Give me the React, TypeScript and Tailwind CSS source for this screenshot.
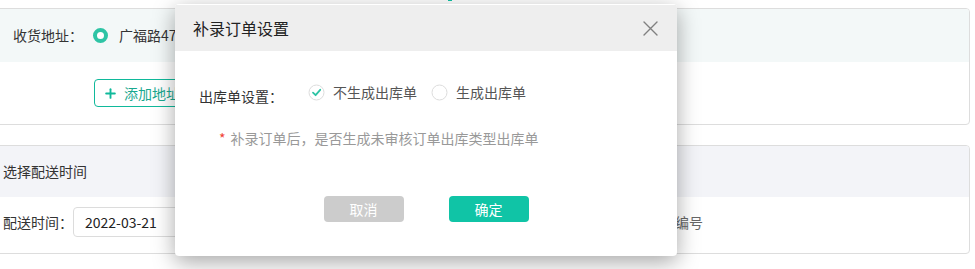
import { Plus } from 'lucide-react';

function CheckCircle() {
  return (
    <svg width="17" height="17" viewBox="0 0 17 17" className="shrink-0">
      <circle cx="8.5" cy="8.5" r="7.5" fill="#fff" stroke="#dcdcdc" strokeWidth="1" />
      <path d="M5 8.7 L7.6 11.2 L12.2 5.8" fill="none" stroke="#2ec4a5" strokeWidth="1.8" strokeLinecap="round" strokeLinejoin="round" />
    </svg>
  );
}

function EmptyCircle() {
  return (
    <svg width="17" height="17" viewBox="0 0 17 17" className="shrink-0">
      <circle cx="8.5" cy="8.5" r="7.5" fill="#fff" stroke="#dcdcdc" strokeWidth="1" />
    </svg>
  );
}

function CloseIcon() {
  return (
    <svg width="15" height="15" viewBox="0 0 15 15">
      <path d="M1 1 L14 14 M14 1 L1 14" stroke="#808080" strokeWidth="1.4" strokeLinecap="round" />
    </svg>
  );
}

function SupplementDialog() {
  return (
    <div className="absolute left-[175px] top-[4px] w-[502px] h-[252px] bg-white rounded-[4px] overflow-hidden shadow-[0_6px_22px_rgba(0,0,0,0.35)]">
      <div className="h-[46px] bg-[#eeeeee] flex items-center justify-between pl-[18px] pr-[19px] mt-px">
        <span className="text-[16px] text-[#222]">补录订单设置</span>
        <CloseIcon />
      </div>
      <div className="flex items-center pl-[24px] mt-[28px] h-[26px]">
        <span className="w-[109px] text-[14px] text-[#333] pt-[8px]">出库单设置：</span>
        <div className="flex items-center gap-[8px]">
          <CheckCircle />
          <span className="text-[14px] text-[#555]">不生成出库单</span>
        </div>
        <div className="flex items-center gap-[8px] ml-[14px]">
          <EmptyCircle />
          <span className="text-[14px] text-[#555]">生成出库单</span>
        </div>
      </div>
      <div className="flex items-start pl-[44px] mt-[22px] text-[14px]">
        <span className="text-[#f04134] mr-[5px] leading-[22px]">*</span>
        <span className="text-[#999] leading-[22px]">补录订单后，是否生成未审核订单出库类型出库单</span>
      </div>
      <div className="flex justify-center gap-[45px] mt-[47px]">
        <button type="button" className="w-[80px] h-[26px] rounded-[4px] bg-[#cccccc] text-white text-[14px]">
          取消
        </button>
        <button type="button" className="w-[80px] h-[26px] rounded-[4px] bg-[#10c4a6] text-white text-[14px]">
          确定
        </button>
      </div>
    </div>
  );
}

export default function App() {
  return (
    <div
      className="relative w-[975px] h-[269px] bg-white overflow-hidden"
      style={{ fontFamily: '"Noto Sans CJK SC", "Noto Sans", sans-serif' }}
    >
      <div className="h-[8px]">
        <div className="ml-[448px] w-[4px] h-px bg-[#10c4a6]" />
      </div>

      <div className="-ml-[8px] w-[978px] h-[117px] border border-[#dddddd] rounded-[4px] overflow-hidden">
        <div className="h-[53px] bg-[#f3f8f8] flex items-center pl-[20px]">
          <span className="w-[80px] text-[14px] text-[#333]">收货地址：</span>
          <span className="w-[15px] h-[15px] rounded-full border-[4px] border-[#2ec4a5] bg-white" />
          <span className="ml-[11px] text-[14px] text-[#333]">广福路47号</span>
        </div>
        <div className="pl-[101px] pt-[17px]">
          <button
            type="button"
            className="h-[28px] px-[8px] flex items-center gap-[6px] border border-[#10b99b] rounded-[4px] text-[14px] text-[#1aa88f]"
          >
            <Plus className="w-[15px] h-[15px] text-[#10b99b]" strokeWidth={3} />
            <span>添加地址</span>
          </button>
        </div>
      </div>

      <div className="-ml-[8px] mt-[20px] w-[978px] h-[109px] border border-[#dddddd] rounded-[4px] overflow-hidden">
        <div className="h-[51px] bg-[#f3f4f8] flex items-center pl-[10px]">
          <span className="text-[14px] text-[#333]">选择配送时间</span>
        </div>
        <div className="flex items-center pl-[10px] pt-[10px]">
          <span className="w-[70px] text-[14px] text-[#333]">配送时间：</span>
          <div className="w-[220px] h-[30px] border border-[#dcdcdc] rounded-[4px] flex items-center pl-[11px] text-[14px] text-[#222]">
            2022-03-21
          </div>
          <span className="ml-[354px] text-[14px] text-[#666]">订单编号</span>
        </div>
      </div>

      <SupplementDialog />
    </div>
  );
}
